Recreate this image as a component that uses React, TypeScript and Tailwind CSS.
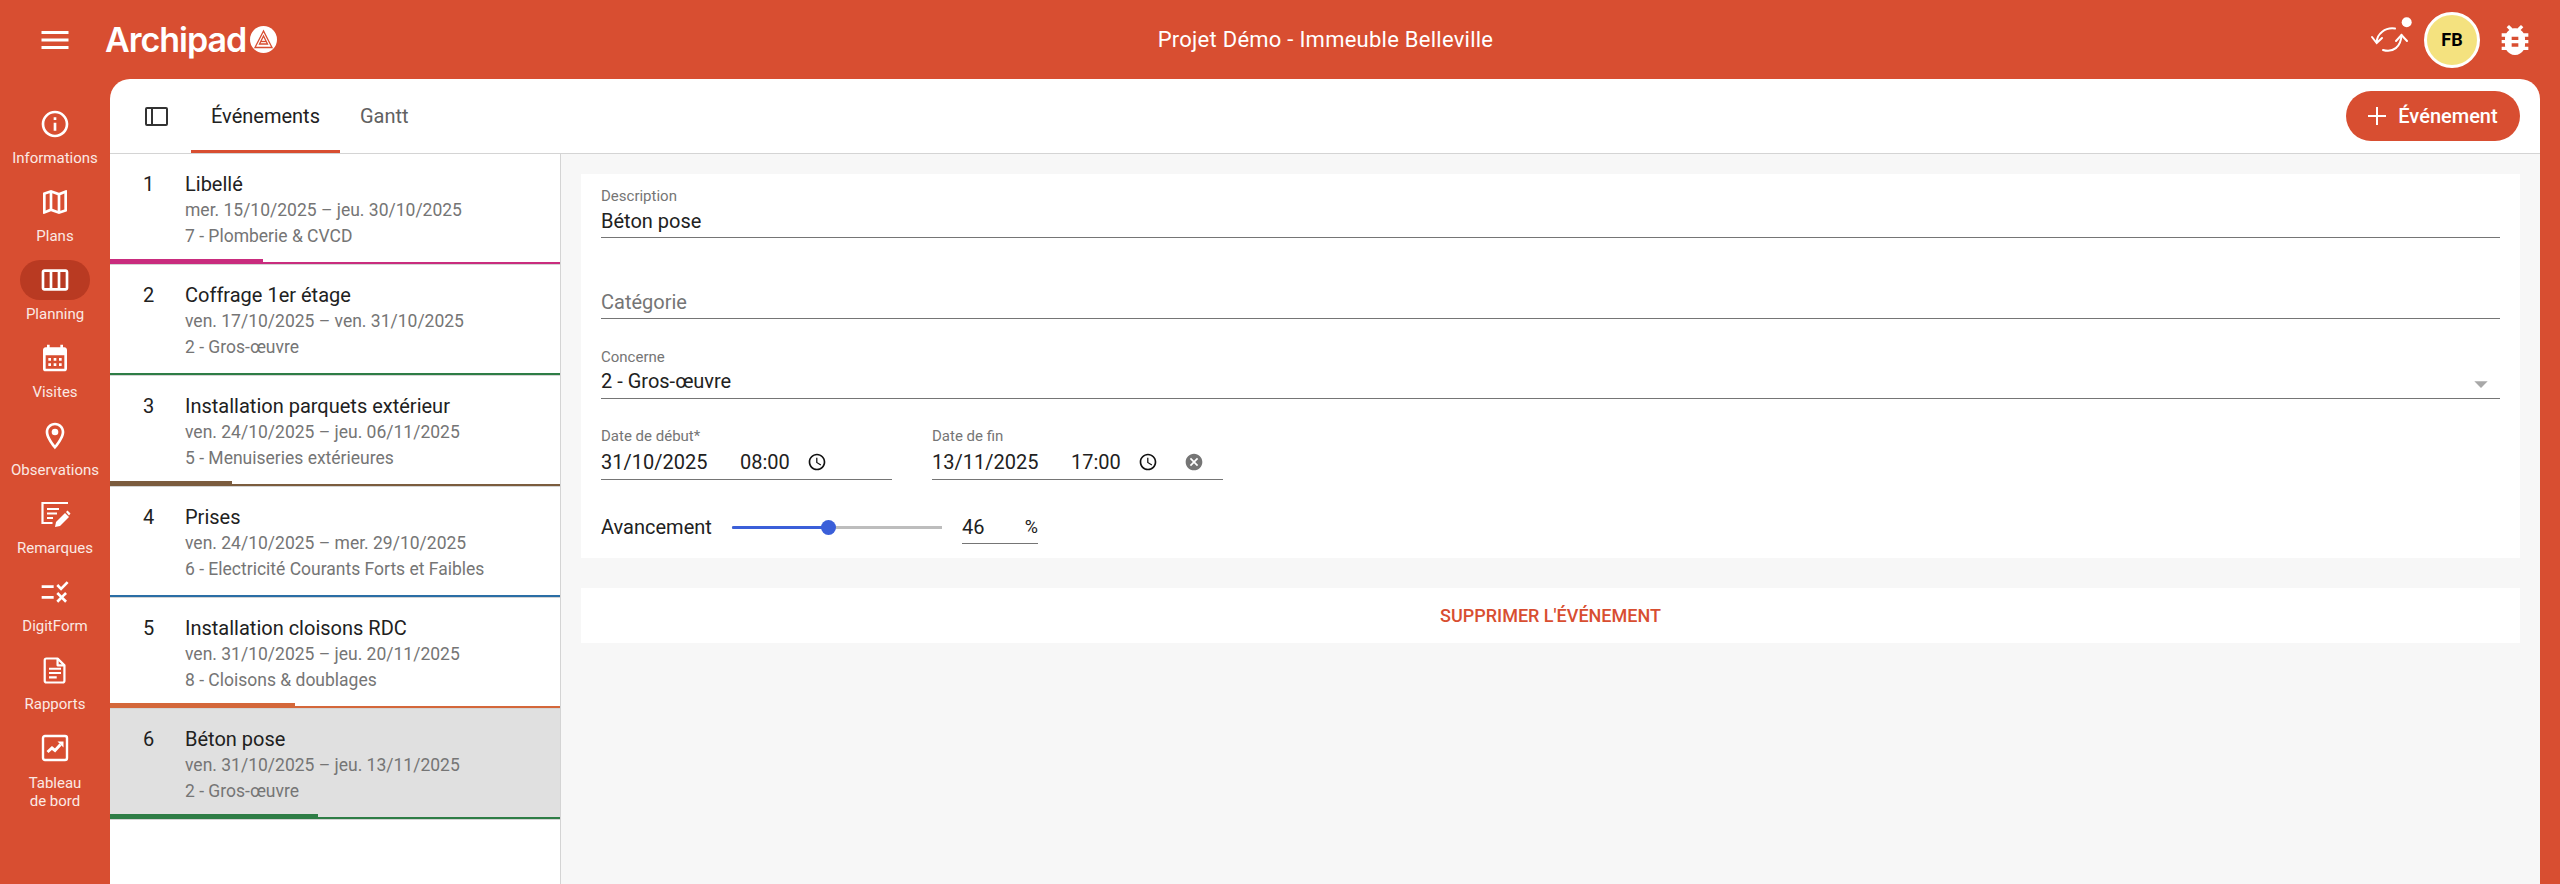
import type { ReactNode } from 'react';
import {
    MdAccessTime,
    MdArrowDropDown,
    MdBugReport,
    MdCalendarMonth,
    MdCancel,
    MdInfoOutline,
    MdMenu,
    MdOutlineLocationOn,
    MdOutlineMap,
    MdOutlineViewWeek,
    MdRule,
} from 'react-icons/md';

function RemarksIcon() {
    return (
        <svg width="32" height="32" viewBox="0 0 32 32" fill="none" stroke="white" strokeWidth="2.2">
            <path d="M29 5H3.5v20h10" />
            <path d="M8 11h12M8 15.500h10M8 20h6" />
            <path d="M16 29l1-5 9-9 4 4-9 9z" fill="white" stroke="none" />
            <path d="M27 14l1.500-1.500 3 3L30 17.500z" fill="white" stroke="none" />
        </svg>
    );
}

function ReportIcon() {
    return (
        <svg width="24" height="29" viewBox="0 0 28 32" fill="none" stroke="white" strokeWidth="2.6" strokeLinejoin="round">
            <path d="M4 2h13l8 8v18a2 2 0 0 1-2 2H4a2 2 0 0 1-2-2V4a2 2 0 0 1 2-2z" />
            <path d="M17 2v8h8" />
            <path d="M7 14h14M7 19h14M7 24h9" strokeWidth="2.4" />
        </svg>
    );
}

function ChartIcon() {
    return (
        <svg width="28" height="28" viewBox="0 0 28 28" fill="none" stroke="white">
            <rect x="2" y="2" width="24" height="24" rx="2" strokeWidth="2.4" />
            <path d="M6.500 18l4.500-4 3 2.500 5.500-6" strokeWidth="3" />
            <path d="M16.500 7.500h6v6z" fill="white" stroke="none" />
        </svg>
    );
}

function SyncIcon() {
    return (
        <svg width="59" height="59" viewBox="0 0 59 59" fill="none" stroke="white" strokeWidth="2" strokeLinecap="round">
            <path d="M11.700 32C12 24 20 17 30 18.500" />
            <path d="M7 27l4.700 6 5.300-5" />
            <path d="M18 40c10 3 18-3 18.500-15" />
            <path d="M31 31l5.500-6 5.500 6" />
            <circle cx="41.700" cy="12.300" r="5" fill="white" stroke="none" />
        </svg>
    );
}

function LogoMark() {
    return (
        <svg width="27" height="27" viewBox="0 0 27 27">
            <circle cx="13.5" cy="13.5" r="13.5" fill="white" />
            <g fill="none" stroke="#d84e31" strokeWidth="1.3">
                <path d="M13.5 5L5 21.500h17z" />
                <path d="M13.500 10l-4 8h8z" />
                <path d="M11 15.500h5" />
            </g>
        </svg>
    );
}

const navItems: { label: ReactNode; icon: ReactNode; active?: boolean; twoLines?: boolean }[] = [
    { label: 'Informations', icon: <MdInfoOutline size={32} /> },
    { label: 'Plans', icon: <MdOutlineMap size={32} /> },
    { label: 'Planning', icon: <MdOutlineViewWeek size={32} />, active: true },
    { label: 'Visites', icon: <MdCalendarMonth size={32} /> },
    { label: 'Observations', icon: <MdOutlineLocationOn size={32} /> },
    { label: 'Remarques', icon: <RemarksIcon /> },
    { label: 'DigitForm', icon: <MdRule size={32} /> },
    { label: 'Rapports', icon: <ReportIcon /> },
    { label: <>Tableau<br />de bord</>, icon: <ChartIcon />, twoLines: true },
];

const events = [
    { n: 1, title: 'Libellé', dates: 'mer. 15/10/2025 – jeu. 30/10/2025', lot: '7 - Plomberie & CVCD', color: 'bg-[#c92c7e]', progress: 'w-[153px]' },
    { n: 2, title: 'Coffrage 1er étage', dates: 'ven. 17/10/2025 – ven. 31/10/2025', lot: '2 - Gros-œuvre', color: 'bg-[#2e7d46]', progress: 'w-0' },
    { n: 3, title: 'Installation parquets extérieur', dates: 'ven. 24/10/2025 – jeu. 06/11/2025', lot: '5 - Menuiseries extérieures', color: 'bg-[#7b5c3e]', progress: 'w-[122px]' },
    { n: 4, title: 'Prises', dates: 'ven. 24/10/2025 – mer. 29/10/2025', lot: '6 - Electricité Courants Forts et Faibles', color: 'bg-[#2a6ea5]', progress: 'w-0' },
    { n: 5, title: 'Installation cloisons RDC', dates: 'ven. 31/10/2025 – jeu. 20/11/2025', lot: '8 - Cloisons & doublages', color: 'bg-[#d4673a]', progress: 'w-[185px]' },
    { n: 6, title: 'Béton pose', dates: 'ven. 31/10/2025 – jeu. 13/11/2025', lot: '2 - Gros-œuvre', color: 'bg-[#2e7d46]', progress: 'w-[208px]', selected: true },
];

function DateField({ label, date, time, clearable, className }: { label: string; date: string; time: string; clearable?: boolean; className: string }) {
    return (
        <div className={`w-[291px] ${className}`}>
            <div className="text-[15px] leading-4 text-[#757575]">{label}</div>
            <div className="mt-[2px] flex h-[34px] items-center border-b border-[#757575] pb-[2px] text-[20px] text-[#212121]">
                <span className="w-[139px]">{date}</span>
                <span className="w-[67px]">{time}</span>
                <MdAccessTime size={20} className="text-[#111]" />
                {clearable && <MdCancel size={20} className="ml-[26px] text-[#757575]" />}
            </div>
        </div>
    );
}

export default function App() {
    return (
        <div className="flex h-[884px] w-[2560px] flex-col overflow-hidden bg-[#d84e31] font-['Roboto',sans-serif] text-white">
            <header className="flex h-[79px] shrink-0 items-center">
                <MdMenu size={36} className="ml-[37px]" />
                <div className="ml-[32px] flex w-[181px] items-center">
                    <span className="font-['Inter',sans-serif] text-[34px] font-semibold tracking-[-1px]">Archipad</span>
                    <span className="ml-[4px]"><LogoMark /></span>
                </div>
                <div className="flex-1 text-center text-[22px] tracking-[0.25px]">Projet Démo - Immeuble Belleville</div>
                <div className="flex w-[195px] items-center">
                    <SyncIcon />
                    <div className="flex size-[56px] items-center justify-center rounded-full border-[3px] border-white bg-[#f4e27f] text-[18px] font-bold text-black">FB</div>
                    <MdBugReport size={40} className="ml-[15px]" />
                </div>
            </header>
            <div className="flex min-h-0 flex-1">
                <nav className="flex w-[110px] shrink-0 flex-col items-center pt-[25px]">
                    {navItems.map((item, i) => (
                        <div key={i} className="flex h-[78px] w-full flex-col items-center">
                            <div className={`flex h-[40px] w-[70px] shrink-0 items-center justify-center rounded-[20px] ${item.active ? 'bg-[#b93a22]' : ''}`}>{item.icon}</div>
                            <div className={`text-center text-[15px] leading-[18px] text-[#fbe9e4] ${item.twoLines ? 'mt-[6px]' : 'mt-[5px]'}`}>{item.label}</div>
                        </div>
                    ))}
                </nav>
                <main className="mr-[20px] flex min-w-0 flex-1 flex-col overflow-hidden rounded-t-[20px] bg-white text-[#212121]">
                    <div className="flex h-[75px] shrink-0 items-center border-b border-[#d4d4d4]">
                        <div className="ml-[35px] mr-[23px] h-[19px] w-[23px] rounded-[2px] border-[2.5px] border-[#333]">
                            <div className="h-full w-[6px] border-r-[2.5px] border-[#333]" />
                        </div>
                        <div className="flex h-full w-[149px] items-center justify-center border-b-[3px] border-[#d84e31] pt-[3px] text-[20px]">Événements</div>
                        <div className="flex h-full items-center px-[20px] text-[20px] text-[#616161]">Gantt</div>
                        <button className="ml-auto mr-[20px] flex h-[50px] w-[174px] items-center justify-center gap-[12px] rounded-[25px] bg-[#d84e31] text-[20px] font-medium text-white">
                            <svg width="18" height="18" viewBox="0 0 18 18" stroke="white" strokeWidth="2"><path d="M9 0v18M0 9h18" /></svg>
                            Événement
                        </button>
                    </div>
                    <div className="flex min-h-0 flex-1">
                        <div className="w-[451px] shrink-0 border-r border-[#d4d4d4]">
                            {events.map((e) => (
                                <div key={e.n} className={`relative flex h-[111px] border-b border-[#d4d4d4] pt-[17px] ${e.selected ? 'bg-[#e0e0e0]' : 'bg-white'}`}>
                                    <div className="w-[75px] pl-[33px] text-[20px] leading-[26px]">{e.n}</div>
                                    <div>
                                        <div className="text-[20px] leading-[26px]">{e.title}</div>
                                        <div className="mt-[1px] text-[17.5px] leading-[25px] text-[#757575]">{e.dates}</div>
                                        <div className="mt-[1px] text-[17.5px] leading-[25px] text-[#757575]">{e.lot}</div>
                                    </div>
                                    <div className={`absolute inset-x-0 bottom-0 h-[2px] ${e.color}`} />
                                    <div className={`absolute bottom-0 left-0 h-[5px] ${e.color} ${e.progress}`} />
                                </div>
                            ))}
                        </div>
                        <div className="flex-1 bg-[#f7f7f7] p-[20px]">
                            <section className="h-[384px] bg-white px-[20px] pt-[13px]">
                                <div className="text-[15px] leading-[18px] text-[#757575]">Description</div>
                                <div className="flex h-[33px] items-center border-b border-[#757575] text-[20px]">Béton pose</div>
                                <div className="mt-[47px] flex h-[34px] items-center border-b border-[#757575] text-[20px] text-[#757575]">Catégorie</div>
                                <div className="mt-[29px] text-[15px] leading-[18px] text-[#757575]">Concerne</div>
                                <div className="relative flex h-[33px] items-center border-b border-[#757575] pb-[2px] text-[20px]">
                                    2 - Gros-œuvre
                                    <MdArrowDropDown size={32} className="absolute right-[3px] top-[2px] text-[#a8a8a8]" />
                                </div>
                                <div className="mt-[29px] flex">
                                    <DateField label="Date de début*" date="31/10/2025" time="08:00" className="mr-[40px]" />
                                    <DateField label="Date de fin" date="13/11/2025" time="17:00" clearable className="" />
                                </div>
                                <div className="mt-[30px] flex items-center text-[20px]">
                                    <span className="w-[131px]">Avancement</span>
                                    <div className="relative h-[3px] w-[210px] bg-[#bdbdbd]">
                                        <div className="h-full w-[96px] rounded-l bg-[#3b5fd9]" />
                                        <div className="absolute -top-[6px] left-[89px] size-[15px] rounded-full bg-[#3b5fd9]" />
                                    </div>
                                    <div className="ml-[20px] flex h-[34px] w-[76px] items-center justify-between border-b border-[#757575]">
                                        <span>46</span>
                                        <span className="text-[18px]">%</span>
                                    </div>
                                </div>
                            </section>
                            <section className="mt-[30px] flex h-[55px] items-center justify-center bg-white text-[18px] font-medium text-[#d84e31]">SUPPRIMER L'ÉVÉNEMENT</section>
                        </div>
                    </div>
                </main>
            </div>
        </div>
    );
}
